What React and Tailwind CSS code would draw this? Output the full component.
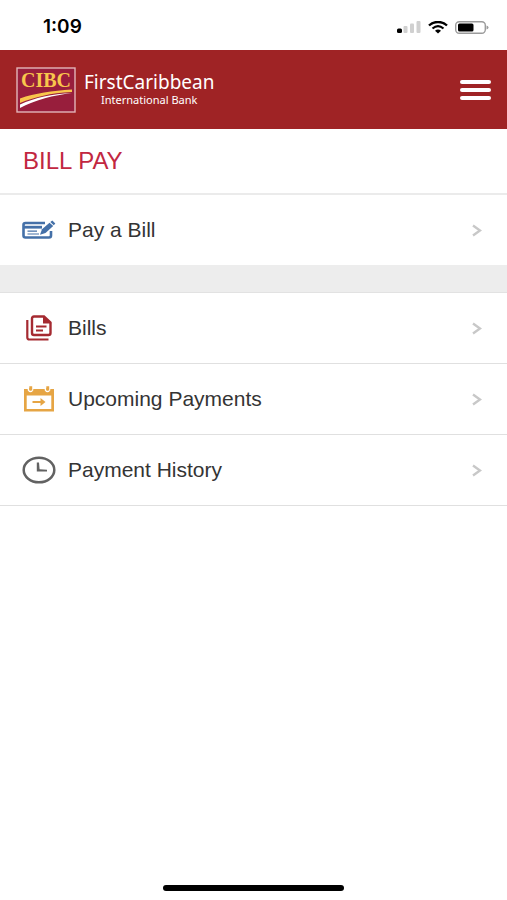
import React from 'react';

const BillPayIcon = () => (
    <svg viewBox="0 0 34 20" className="w-[34px] h-5" fill="none" aria-hidden="true">
        <path d="M23 3H3.500Q1.500 3 1.500 5V15.500Q1.500 17.500 3.500 17.500H27Q29 17.500 29 15.500V11" stroke="#4470a8" strokeWidth="2.600" />
        <path d="M2 7.200H20" stroke="#4470a8" strokeWidth="2.800" />
        <path d="M5.500 11.200H15M5.500 14H17" stroke="#4470a8" strokeWidth="1.200" />
        <path d="M18 14.800L20 9.300L27.500 2.800L31.200 6L23.500 12.900Z" fill="#4470a8" />
        <path d="M28.300 2L30.300 .5L33.300 3.400L31.800 5.200Z" fill="#4470a8" />
    </svg>
);

const BillsIcon = () => (
    <svg viewBox="0 0 26 26" className="w-[26px] h-[26px]" fill="none" stroke="#a52a31" aria-hidden="true">
        <path d="M1.300 5V22.500Q1.300 24.500 3.500 24.500H22.500" strokeWidth="2.200" />
        <path d="M8 1.500H18L24.500 7.500V18Q24.500 20 22.500 20H8Q6 20 6 18V3.500Q6 1.500 8 1.500Z" strokeWidth="2.400" />
        <path d="M17 1L25.500 8.500H17Z" fill="#a52a31" stroke="none" />
        <path d="M10 11.500H20.500M10 15.500H17" strokeWidth="2" />
    </svg>
);

const UpcomingIcon = () => (
    <svg viewBox="0 0 32 26" className="w-8 h-[26px]" aria-hidden="true">
        <path d="M1 3H31V25.500H1ZM3.700 9.500V23H28.300V9.500Z" fill="#e6a544" fillRule="evenodd" />
        <path d="M5.500 2V4Q7.500 7 9.500 4V2M22.500 2V4Q24.500 7 26.500 4V2" fill="#e6a544" stroke="#fff" strokeWidth="1.600" />
        <path d="M6.300 .3H9.200V4.500H6.300ZM23.300 .3H26.200V4.500H23.300Z" fill="#e6a544" />
        <path d="M9.500 16H20" stroke="#e6a544" strokeWidth="2" />
        <path d="M17.500 12L22.500 16L17.500 20Z" fill="#e6a544" />
    </svg>
);

const HistoryIcon = () => (
    <svg viewBox="0 0 34 28" className="w-[34px] h-7" fill="none" stroke="#626262" aria-hidden="true">
        <ellipse cx="17" cy="14" rx="15.300" ry="12.300" strokeWidth="2.500" />
        <path d="M14.800 6.500H17L17.600 13.200L25 13.800V15.500H14.800Z" fill="#626262" stroke="none" />
    </svg>
);

const Chevron = () => (
    <svg viewBox="0 0 10 14" className="w-[10px] h-[14px]" fill="none" aria-hidden="true">
        <path d="M1 2.500L8 7.500L1 12.500" stroke="#c8c8c8" strokeWidth="2.400" />
    </svg>
);

const CibcLogo = () => (
    <svg viewBox="0 0 60 46" className="w-[60px] h-[46px] shrink-0" role="img" aria-label="CIBC">
        <rect x="1" y="1" width="58" height="44" fill="#981e3c" stroke="#e3b5b8" strokeWidth="1.400" />
        <text x="30" y="20" textAnchor="middle" fontFamily="'Liberation Serif', serif" fontWeight="700" fontSize="20" fill="#f8c64c">CIBC</text>
        <path d="M4 31.500C19 26 36 24 56 22.500V25C34 26 19 30 4 36Z" fill="#f8c64c" />
        <path d="M4 37.500C19 30.500 36 27 56 26C37 28.500 20 32.500 4 41Z" fill="#fff" />
    </svg>
);

const StatusBar = () => (
    <div className="h-[50px] pl-[43px] pr-[18px] flex items-center justify-between text-black">
        <span className="pt-1 font-['Inter',sans-serif] text-[19px] leading-6 font-semibold">1:09</span>
        <div className="pt-1 flex items-center gap-[7px]">
            <svg viewBox="0 0 24 12" className="w-6 h-3" aria-hidden="true">
                <rect x="0" y="7.500" width="5" height="4.500" rx="1.500" fill="#000" />
                <rect x="6.500" y="5" width="4" height="7" rx="1" fill="#d0d0d0" />
                <rect x="13" y="2.500" width="4" height="9.500" rx="1" fill="#d0d0d0" />
                <rect x="19.500" y="0" width="4" height="12" rx="1" fill="#d0d0d0" />
            </svg>
            <svg viewBox="0 0 20 13" className="w-5 h-[13px]" fill="none" stroke="#000" aria-hidden="true">
                <path d="M1 4.500C6 -.2 14 -.2 19 4.500" strokeWidth="2.400" />
                <path d="M4.500 7.500C8 4.500 12 4.500 15.500 7.500" strokeWidth="2.200" />
                <path d="M7 9.700C9 8.200 11 8.200 13 9.700L10 12.500Z" fill="#000" stroke="none" />
            </svg>
            <svg viewBox="0 0 34 13" className="w-[34px] h-[13px]" aria-hidden="true">
                <rect x=".7" y=".7" width="29.600" height="11.600" rx="3.500" fill="none" stroke="#9b9b9b" strokeWidth="1.400" />
                <rect x="3" y="2.500" width="15.500" height="8" rx="1.500" fill="#000" />
                <path d="M31.500 4.500Q33.500 5 33.500 6.500T31.500 8.500Z" fill="#9b9b9b" />
            </svg>
        </div>
    </div>
);

const historyItems = [
    { label: 'Bills', icon: BillsIcon },
    { label: 'Upcoming Payments', icon: UpcomingIcon },
    { label: 'Payment History', icon: HistoryIcon },
];

const MenuRow = ({ label, icon: Icon }) => (
    <a href="#" className="h-[70px] pl-[22px] pr-[25px] flex items-center text-[#343434]">
        <span className="w-[34px] mr-3 flex justify-center shrink-0">
            <Icon />
        </span>
        <span className="flex-1 text-[21px] leading-6">{label}</span>
        <Chevron />
    </a>
);

const App = () => {
    return (
        <div className="min-h-screen flex flex-col bg-white font-['Liberation_Sans',Arial,sans-serif]">
            <StatusBar />

            {/* Brand header */}
            <header className="h-[79px] pl-4 pr-4 flex items-center justify-between bg-[#9f2325]">
                <div className="flex items-center gap-2 text-white font-['Noto_Sans',sans-serif]">
                    <CibcLogo />
                    <div className="flex flex-col items-center">
                        <span className="text-[19px] leading-5">FirstCaribbean</span>
                        <span className="text-[11px] leading-4">International Bank</span>
                    </div>
                </div>
                <button type="button" aria-label="Open menu" className="w-[31px] flex flex-col gap-1">
                    <span className="h-1 w-full rounded-full bg-white" />
                    <span className="h-1 w-full rounded-full bg-white" />
                    <span className="h-1 w-full rounded-full bg-white" />
                </button>
            </header>

            <main className="flex-1">
                <div className="h-[66px] px-[23px] flex items-center border-b-2 border-[#ebebeb]">
                    <h1 className="text-2xl leading-6 font-normal text-[#c22741]">BILL PAY</h1>
                </div>
                <MenuRow label="Pay a Bill" icon={BillPayIcon} />

                <div className="h-7 bg-[#ededed] border-b border-[#e2e2e2]" />

                {/* Payment records */}
                <ul>
                    {historyItems.map((item) => (
                        <li key={item.label} className="border-b border-[#e0e0e0]">
                            <MenuRow label={item.label} icon={item.icon} />
                        </li>
                    ))}
                </ul>
            </main>

            {/* Home indicator */}
            <div className="pb-[9px] flex justify-center">
                <div className="w-[181px] h-[6px] rounded-full bg-black" />
            </div>
        </div>
    );
};

export default App;
